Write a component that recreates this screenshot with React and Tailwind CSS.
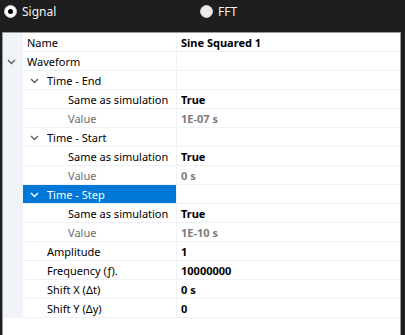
const rows = [
  { name: "Name", value: "Sine Squared 1", level: 0 },
  { name: "Waveform", level: 0, group: true },
  { name: "Time - End", level: 1, group: true },
  { name: "Same as simulation", value: "True", level: 2 },
  { name: "Value", value: "1E-07 s", level: 2, muted: true },
  { name: "Time - Start", level: 1, group: true },
  { name: "Same as simulation", value: "True", level: 2 },
  { name: "Value", value: "0 s", level: 2, muted: true },
  { name: "Time - Step", level: 1, group: true, selected: true },
  { name: "Same as simulation", value: "True", level: 2 },
  { name: "Value", value: "1E-10 s", level: 2, muted: true },
  { name: "Amplitude", value: "1", level: 1 },
  { name: "Frequency (ƒ).", value: "10000000", level: 1 },
  { name: "Shift X (Δt)", value: "0 s", level: 1 },
  { name: "Shift Y (Δy)", value: "0", level: 1 },
];

const Chevron = ({ white }) => (
  <svg width="9" height="6" viewBox="0 0 9 6" fill="none">
    <path
      d="M1 1l3.5 3.5L8 1"
      stroke={white ? "#ffffff" : "#5f5f5f"}
      strokeWidth="1.4"
    />
  </svg>
);

const Radio = ({ checked, label }) => (
  <div className="flex items-center gap-[5px]">
    <div
      className={`flex h-[13px] w-[13px] items-center justify-center rounded-full border border-[#cfcfcf] ${
        checked ? "bg-white" : "bg-[#ececec]"
      }`}
    >
      {checked && <div className="h-[5px] w-[5px] rounded-full bg-black" />}
    </div>
    <span className="text-[12px] text-[#f2f2f2]">{label}</span>
  </div>
);

const Row = ({ row }) => {
  const pad = row.level === 0 ? "pl-[4px]" : row.level === 1 ? "pl-[24px]" : "pl-[45px]";
  return (
    <div className="flex h-[19px]">
      <div className="relative w-[20px] shrink-0 bg-[#f0f4f9]">
        {row.group && row.level === 0 && (
          <div className="absolute left-[4px] top-[7px]">
            <Chevron />
          </div>
        )}
      </div>
      <div
        className={`relative flex w-[154px] shrink-0 items-center whitespace-nowrap border-r border-b border-[#eef1f6] ${pad} ${
          row.selected ? "bg-[#0078d7] text-white" : row.muted ? "text-[#6d6d6d]" : "text-black"
        }`}
      >
        {row.group && row.level === 1 && (
          <div className="absolute left-[7px] top-[7px]">
            <Chevron white={row.selected} />
          </div>
        )}
        <span className="leading-none">{row.name}</span>
      </div>
      <div
        className={`flex flex-1 items-center whitespace-nowrap border-b border-[#eef1f6] pl-[4px] font-bold ${
          row.muted ? "text-[#7b7b7b]" : "text-black"
        }`}
      >
        <span className="leading-none">{row.value}</span>
      </div>
    </div>
  );
};

export default function App() {
  return (
    <div
      className="flex h-[335px] w-[405px] flex-col overflow-hidden bg-[#1e1e1e] text-[11px]"
      style={{ fontFamily: "'Noto Sans', 'Open Sans', sans-serif" }}
    >
      <div className="flex h-[32px] shrink-0 items-center pb-[11px] pt-[2px]">
        <div className="w-[200px] pl-[4px]">
          <Radio checked label="Signal" />
        </div>
        <Radio label="FFT" />
      </div>
      <div className="ml-[2px] mr-[4px] flex-1 border border-b-0 border-[#9a9a9a] bg-white">
        {rows.map((row, i) => (
          <Row key={i} row={row} />
        ))}
      </div>
    </div>
  );
}
